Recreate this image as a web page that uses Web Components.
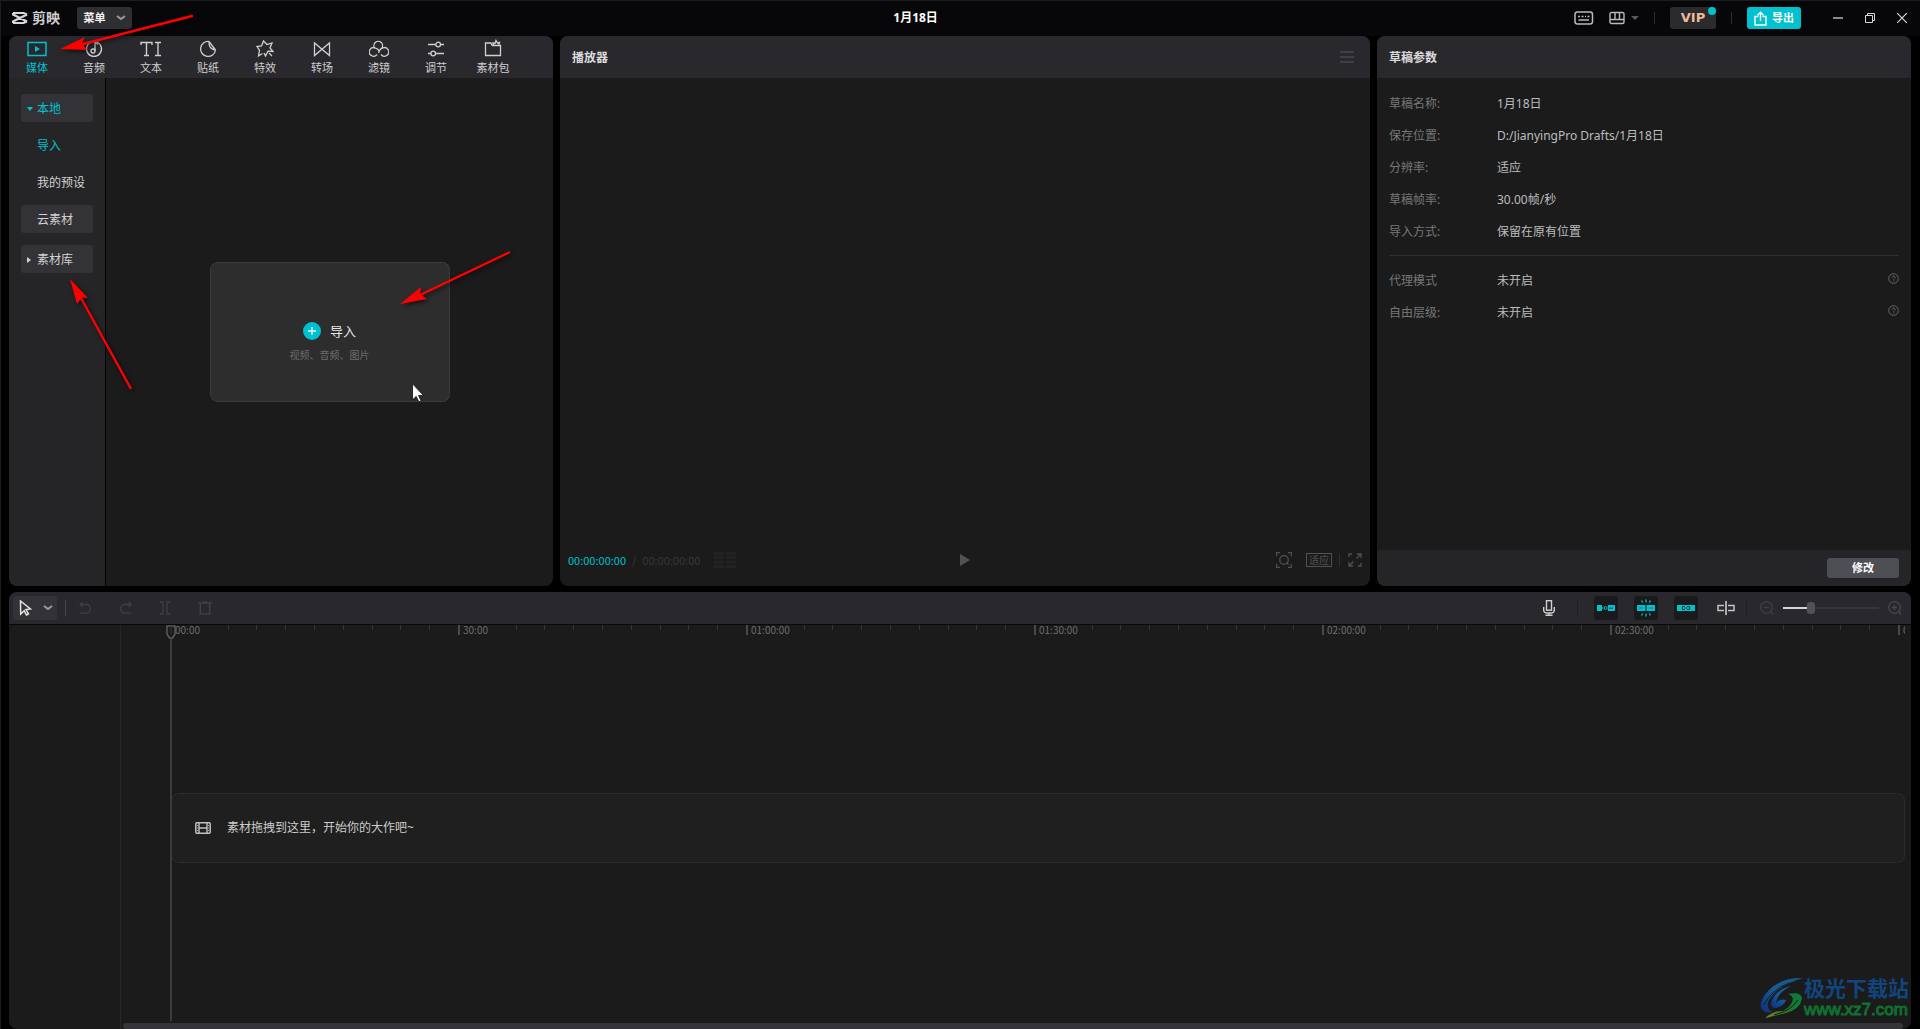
<!DOCTYPE html>
<html lang="zh-CN">
<head>
<meta charset="utf-8">
<title>剪映</title>
<style>
html,body{margin:0;height:100%;background:#000}
body{font:12px/16px "Noto Sans","Noto Sans CJK SC",sans-serif;color:#c8c8c8;overflow:hidden;
--accent:#00c1cd;--head:#29282d;--body:#1b1b1b;--side:#252527;--btn:#333237}
</style>
</head>
<body>
<jy-app></jy-app>
<script>
const ICONS = {
  logo:[16,14,'<path d="M1 2h10.500L15 3.500M1 12h10.500L15 10.500M1 2v1.500L15 10.500M1 12v-1.500L15 3.500" fill="none" stroke="#d8d8d8" stroke-width="2.200"/>'],
  chevron:[10,6,'<path d="M1 1l4 3 4-3" fill="none" stroke="#9a9a9c" stroke-width="2"/>'],
  media:[20,20,'<rect x="1" y="3.500" width="18" height="13" fill="none" stroke="currentColor" stroke-width="1.500"/><path d="M8 7l5 3-5 3z" fill="currentColor"/>'],
  audio:[20,20,'<path d="M7 3A7.500 7.500 0 1 0 13 3" fill="none" stroke="currentColor" stroke-width="1.300"/><circle cx="9" cy="12" r="2" fill="none" stroke="currentColor" stroke-width="1.300"/><path d="M11 12V3l3 2.500" fill="none" stroke="currentColor" stroke-width="1.300"/>'],
  text:[22,20,'<path d="M1 6V3.500h11V6M6.500 3.500v13M4 16.500h5M15 3.500h6M15 16.500h6M18 3.500v13" fill="none" stroke="currentColor" stroke-width="1.400"/>'],
  sticker:[20,20,'<path d="M11 2.500A7.500 7.500 0 1 0 17.500 11M11 2.500Q10.500 10 17.500 11M11 2.500L17.500 11" fill="none" stroke="currentColor" stroke-width="1.300"/>'],
  effect:[20,20,'<path d="M7.500 14.500L3.500 17l1-5.500L2 7.500l4.500-.5L8.500 2l3.500 3.500 5-1.500-2 5 3 3.500-5-.3-2.500 4.800-1.500-3M14 14l3 3" fill="none" stroke="currentColor" stroke-width="1.300"/>'],
  transition:[20,20,'<path d="M2.500 4v12.500L17.500 4v12.500z" fill="none" stroke="currentColor" stroke-width="1.300"/>'],
  filter:[20,20,'<path d="M6 9.500A4.300 4.300 0 1 1 12.500 9.500M8 15.500A4.300 4.300 0 1 1 6 8.800Q9 9.500 10 12M12 15.500A4.300 4.300 0 1 0 14 8.800Q10 10 9.700 14" fill="none" stroke="currentColor" stroke-width="1.300"/>'],
  adjust:[20,20,'<path d="M2 5.500h8M14.500 5.500H18M2 14.500h3M9.500 14.500H18" stroke="currentColor" stroke-width="1.300"/><circle cx="12.200" cy="5.500" r="2.300" fill="none" stroke="currentColor" stroke-width="1.300"/><circle cx="7.200" cy="14.500" r="2.300" fill="none" stroke="currentColor" stroke-width="1.300"/>'],
  pack:[20,20,'<path d="M9 6.500L8 4H2.500v12.500h15V6.500h-2.500M9 6.500h6M10.500 6.500l-.5-2.500 2 .5 1-3 1.500 2.500 2-.500-1 3.500" fill="none" stroke="currentColor" stroke-width="1.300"/>'],
  keyboard:[20,14,'<rect x="1" y="1" width="17.500" height="12" rx="2.500" fill="none" stroke="#b9b9b9" stroke-width="1.500"/><path d="M4 5.500h2m1.500 0h2m1.500 0h1m1.500 0h2M4.500 9h10.500" stroke="#b9b9b9" stroke-width="1.400"/>'],
  layout:[16,14,'<rect x="1" y="1.500" width="14" height="11" rx="1.500" fill="none" stroke="#b9b9b9" stroke-width="1.400"/><path d="M1 8.500h14M6 1.500v7M10.500 1.500v7" stroke="#b9b9b9" stroke-width="1.400"/>'],
  caret:[8,4,'<path d="M0 0h8L4 4z" fill="#58585a"/>'],
  share:[13,15,'<path d="M4.500 5.500H1V14h11V5.500H8.500M6.500 10V1.500M3.500 4.300l3-3 3 3" fill="none" stroke="#fff" stroke-width="1.400"/>'],
  min:[10,10,'<path d="M0 5h10" stroke="#8a8a8a" stroke-width="2"/>'],
  restore:[10,10,'<path d="M.5 2.500h7v7h-7zM2.500 2.500v-2h7v7h-2" fill="none" stroke="#d8d8d8"/>'],
  close:[10,10,'<path d="M0 0l10 10M10 0L0 10" stroke="#d8d8d8" stroke-width="1.200"/>'],
  menu:[14,12,'<path d="M0 1h14M0 6h14M0 11h14" stroke="#48474c" stroke-width="1.500"/>'],
  plus:[18,18,'<circle cx="9" cy="9" r="9" fill="#00c1cd"/><path d="M5 9h8M9 5v8" stroke="#e8f8f8" stroke-width="1.300"/>'],
  down:[6,4,'<path d="M0 0h6L3 4z" fill="currentColor"/>'],
  right:[4,6,'<path d="M0 0l4 3-4 3z" fill="currentColor"/>'],
  blocks:[22,16,'<path d="M0 1.500h10M12 1.500h10M0 5.500h10M12 5.500h10M0 10h10M12 10h10M0 14.500h10M12 14.500h10" stroke="#222" stroke-width="3"/>'],
  play:[10,12,'<path d="M0 0l10 6-10 6z" fill="#525252"/>'],
  scan:[16,16,'<path d="M.7 4V.7H4M12 .7h3.300V4M15.300 12v3.300H12M4 15.300H.7V12" fill="none" stroke="#515151" stroke-width="1.300"/><circle cx="8" cy="8" r="4.300" fill="none" stroke="#515151" stroke-width="1.300"/><path d="M10.500 10.500l2 2" stroke="#515151" stroke-width="1.300"/>'],
  expand:[14,14,'<path d="M1 4V1h3M10 13h3v-3M8.500 5.500L13 1M9 1h4v4M5.500 8.500L1 13M5 13H1V9" fill="none" stroke="#515151" stroke-width="1.300"/>'],
  help:[11,11,'<circle cx="5.500" cy="5.500" r="4.800" fill="none" stroke="#666"/><path d="M4 4.500c0-2 3-2 3 0 0 1-1.500 1-1.500 2.200M5.500 7.500v1" fill="none" stroke="#666"/>'],
  pointer:[13,16,'<path d="M1.500 1l10 8-4.500.5 2.500 4.500-2 1L5.200 10.800 1.700 14z" fill="none" stroke="#e4e4e4" stroke-width="1.500"/>'],
  undo:[13,12,'<path d="M3.500 0L1 2.500 3.500 5M1 2.500h6a4.300 4.300 0 0 1 0 8.700H1" fill="none" stroke="#403f44" stroke-width="1.300"/>'],
  redo:[12,12,'<path d="M8.500 0L11 2.500 8.500 5M11 2.500H5a4.300 4.300 0 0 0 0 8.700h6" fill="none" stroke="#403f44" stroke-width="1.300"/>'],
  split:[10,14,'<path d="M0 1h3v12H0M10 1H7v12h3" fill="none" stroke="#403f44" stroke-width="1.300"/>'],
  trash:[14,14,'<path d="M0 2h14M4.500 1h5M2.300 2v11h9.400V2" fill="none" stroke="#403f44" stroke-width="1.500"/>'],
  mic:[12,16,'<rect x="3.500" y=".7" width="5" height="9.500" fill="none" stroke="#d0d0d0" stroke-width="1.400"/><path d="M.7 7v3.500Q1 13 4 13h4q3 0 3.300-2.500V7M6 13v2M2.500 15.300h7" fill="none" stroke="#d0d0d0" stroke-width="1.400"/>'],
  magnet:[18,16,'<path d="M0 5h5v6H0zM11 5h7v6h-7z" fill="#00c1cd"/><path d="M5 8h1.500m4 0h1" stroke="#00c1cd"/><circle cx="8.500" cy="8" r="1.500" fill="none" stroke="#00c1cd"/><path d="M12 7.500h4v1.500h-4z" fill="#00626a"/>'],
  snap:[18,18,'<path d="M0 6h8.500v6H0zM9.500 6H18v6H9.500z" fill="#00c1cd"/><path d="M2 9h4m6 0h4" stroke="#008a93"/><path d="M9 .5v3M4.500 1.500l1.300 2M13.500 1.500l-1.300 2M9 17.500v-3M4.500 16.500l1.300-2M13.500 16.500l-1.300-2" stroke="#00c1cd" stroke-width="1.300"/>'],
  link:[18,16,'<path d="M0 5h18v6H0z" fill="#00c1cd"/><path d="M8 6.500H5.500v3H8M10 6.500h2.500v3H10M7.500 8h3" fill="none" stroke="#0d4a4e" stroke-width="1.200"/>'],
  preview:[18,16,'<path d="M7 5.500H1v5h6M11 5.500h6v5h-6" fill="none" stroke="#c4c4c4" stroke-width="1.500"/><path d="M9 1v14" stroke="#c4c4c4" stroke-width="1.700"/>'],
  zoomout:[14,14,'<circle cx="6.500" cy="6.500" r="5.800" fill="none" stroke="#414045" stroke-width="1.300"/><path d="M4 6.500h5M11 11l2 2.500" stroke="#414045" stroke-width="1.300"/>'],
  zoomin:[14,14,'<circle cx="6.500" cy="6.500" r="5.800" fill="none" stroke="#48474c" stroke-width="1.300"/><path d="M4 6.500h5M6.500 4v5M11 11l2 2.500" stroke="#48474c" stroke-width="1.300"/>'],
  film:[16,12,'<rect x=".8" y=".8" width="14.400" height="10.400" rx="1" fill="none" stroke="#c0c0c0" stroke-width="1.500"/><path d="M4 1v10M12 1v10M4 6h8" stroke="#c0c0c0" stroke-width="1.400"/><path d="M2.400 3v1m0 1.500v1m0 1.500v1M13.600 3v1m0 1.500v1m0 1.500v1" stroke="#c0c0c0" stroke-width="1"/>'],
  head:[10,14,'<path d="M1 1h8v8l-2.500 4h-3L1 9z" fill="#1b1b1b" stroke="#5a5a5a" stroke-width="1.500" stroke-linejoin="round"/><path d="M5 1v8" stroke="#353535"/>'],
  cursor:[12,19,'<path d="M.5 .8v16l3.700-3.400 2.700 5.400 2.200-1-2.600-5.300h5z" fill="#fff" stroke="#111" stroke-width=".8"/>'],
  swirl:[44,42,'<defs><linearGradient id="b" x1="1" y1="0" x2="0" y2="1"><stop offset="0" stop-color="#145a86"/><stop offset=".5" stop-color="#145c98"/><stop offset="1" stop-color="#102e80"/></linearGradient><linearGradient id="g" x1="1" y1="0" x2="0" y2="1"><stop offset="0" stop-color="#087a3a"/><stop offset=".6" stop-color="#237a28"/><stop offset="1" stop-color="#8a8a18"/></linearGradient></defs><path d="M43 1Q22 0 9 13-1 23 1 31 5 37 12 35 5 31 9 23 18 8 43 1z" fill="url(#b)"/><path d="M31 9Q17 12 12 23 9 31 16 31 24 29 26 23 20 21 16 26 17 16 31 9z" fill="url(#b)"/><path d="M28 17Q42 14 42 22 40 32 26 36L5 41Q14 33 23 34 32 29 33 22 32 18 28 17z" fill="url(#g)"/><path d="M4 28Q11 13 29 6" fill="none" stroke="#1b1b1b"/><path d="M14 38Q31 34 38 23" fill="none" stroke="#1b1b1b"/>']
};
const BASE = `*{box-sizing:border-box}button{font:inherit;color:inherit;background:none;border:0;padding:0;margin:0;display:flex;align-items:center;justify-content:center}`;
function define(name, css, html, setup){
  const t = document.createElement('template');
  t.innerHTML = `<style>${BASE}${css}</style>${html}`;
  customElements.define(name, class extends HTMLElement{
    constructor(){ super(); this.attachShadow({mode:'open'}); }
    connectedCallback(){
      if(this.shadowRoot.childNodes.length) return;
      this.shadowRoot.append(t.content.cloneNode(true));
      if(setup) setup(this, this.shadowRoot);
    }
  });
}
const ic = n => `<jy-icon name="${n}"></jy-icon>`;

define('jy-icon', `:host{display:block;flex:none}svg{display:block}`, '', (el, root) => {
  const [w,h,m] = ICONS[el.getAttribute('name')];
  root.innerHTML += `<svg width="${w}" height="${h}" viewBox="0 0 ${w} ${h}" aria-hidden="true">${m}</svg>`;
});

define('jy-rule', `:host{display:block;flex:none;width:1px;height:12px;background:#2c2c2e}`, '');

define('jy-titlebar', `
:host{display:grid;grid-template-columns:minmax(0,894fr) auto minmax(0,984fr);align-items:center;height:35px;padding-bottom:1px;box-sizing:border-box;background:#070709}
.left,.right,.brand{display:flex;align-items:center}
.left{padding-left:11px}
.brand{gap:4px;font-size:14px;font-weight:700;color:#cfcfcf;width:65px}
.menu{width:55px;height:22px;border-radius:3px;background:#2f2e33;color:#f2f2f2;font-size:11px;font-weight:700;gap:10px}
h1{margin:0;font-size:12px;font-weight:700;color:#fff;white-space:nowrap}
.right{justify-content:flex-end;padding-right:13px;gap:15px}
.lay{gap:6px}
.vip{position:relative;width:46px;height:22px;border-radius:3px;background:#2b2a2d;font:700 13px/16px "DejaVu Sans",sans-serif;color:#eebb9d}
.vip::after{content:"";position:absolute;top:0;right:0;width:8px;height:8px;border-radius:50%;background:var(--accent)}
.export{width:54px;height:22px;border-radius:3px;background:var(--accent);color:#fff;font-size:11px;font-weight:700;gap:5px}
.win{display:flex;gap:22px;margin-left:17px}`,
`<div class="left"><div class="brand">${ic('logo')}<span>剪映</span></div><button class="menu">菜单${ic('chevron')}</button></div>
<h1>1月18日</h1>
<div class="right"><button aria-label="快捷键">${ic('keyboard')}</button><button class="lay" aria-label="布局">${ic('layout')}${ic('caret')}</button><jy-rule></jy-rule><button class="vip">VIP</button><jy-rule></jy-rule><button class="export">${ic('share')}导出</button>
<div class="win"><button aria-label="最小化">${ic('min')}</button><button aria-label="还原">${ic('restore')}</button><button aria-label="关闭">${ic('close')}</button></div></div>`);

define('jy-panel', `
:host{display:flex;flex-direction:column;min-width:0;min-height:0;border-radius:8px;overflow:hidden;background:var(--body)}
header{height:42px;flex:none;display:flex;align-items:center;background:var(--head)}
main{flex:1;min-height:0;display:flex}`,
`<header><slot name="header"></slot></header><main><slot></slot></main><slot name="footer"></slot>`);

define('jy-tab', `
:host{display:block;width:57px;flex:none;color:#cfcfcf}
:host([active]){color:var(--accent)}
button{width:56px;flex-direction:column;gap:1px;font-size:11px;line-height:16px;white-space:nowrap}`,
`<button><span class="i"></span><slot></slot></button>`, (el, root) => {
  root.querySelector('.i').innerHTML = ic(el.getAttribute('icon'));
});

define('jy-side-item', `
:host{display:block;color:#d2d2d2}
:host([active]){color:var(--accent)}
button{width:100%;height:28px;padding-top:2px;justify-content:flex-start;border-radius:3px;white-space:nowrap}
:host([filled]) button{background:var(--btn)}
.i{width:16px;padding-left:6px;flex:none}`,
`<button><span class="i"></span><slot></slot></button>`, (el, root) => {
  const n = el.getAttribute('icon');
  if(n) root.querySelector('.i').innerHTML = ic(n);
});

define('jy-media', `
:host{display:flex;flex:1;min-width:0}
nav{width:97px;flex:none;background:var(--side);border-right:1px solid #050505;padding:16px 12px;display:flex;flex-direction:column}
.group{display:flex;flex-direction:column;gap:9px;margin:9px 0 12px}
section{flex:1;display:flex;align-items:center;justify-content:center}
.card{width:240px;height:140px;border-radius:8px;border:1px dotted #4a4a4a;background:#2d2d2d;flex-direction:column;justify-content:flex-start;padding-top:56px;gap:4px}
.row{display:flex;align-items:center;gap:9px;font-size:13px;line-height:24px;color:#e6e6e6}
.sub{font-size:10px;line-height:16px;color:#6c6c6c}`,
`<nav><jy-side-item filled active icon="down">本地</jy-side-item><div class="group"><jy-side-item active>导入</jy-side-item><jy-side-item>我的预设</jy-side-item><jy-side-item filled>云素材</jy-side-item></div><jy-side-item filled icon="right">素材库</jy-side-item></nav>
<section><button class="card"><span class="row">${ic('plus')}导入</span><span class="sub">视频、音频、图片</span></button></section>`);

define('jy-player', `
:host{display:flex;flex-direction:column;flex:1;min-width:0}
.stage{flex:1}
.bar{height:52px;display:grid;grid-template-columns:1fr auto 1fr;align-items:center;padding:0 8px}
.time,.tools{display:flex;align-items:center}
.time{font:11px/16px "Noto Sans CJK SC",sans-serif;color:#383838;gap:6px}
.time b{font-weight:400;color:var(--accent)}
.time jy-icon{margin-left:8px}
.tools{justify-content:flex-end}
.fit{margin:0 7px 0 14px;border:1px solid #515151;width:26px;height:14px;font-size:10px;line-height:12px;color:#515151}
.full{margin-left:8px}`,
`<div class="stage"></div><div class="bar"><div class="time"><b>00:00:00:00</b><span>/</span><span>00:00:00:00</span>${ic('blocks')}</div><button aria-label="播放">${ic('play')}</button>
<div class="tools"><button aria-label="缩放">${ic('scan')}</button><button class="fit">适应</button><jy-rule></jy-rule><button class="full" aria-label="全屏">${ic('expand')}</button></div></div>`);

define('jy-param', `
:host{display:flex;height:32px;align-items:center;color:#bdbdbd;white-space:nowrap}
.l{width:108px;flex:none;color:#777}
.v{flex:1}
jy-icon{align-self:flex-start;margin-top:8px}`,
`<span class="l"></span><span class="v"><slot></slot></span>`, (el, root) => {
  root.querySelector('.l').textContent = el.getAttribute('label');
  if(el.hasAttribute('help')) root.append(Object.assign(document.createElement('template'), {innerHTML: ic('help')}).content);
});

define('jy-params', `
:host{display:block;flex:1;padding:10px 12px}
hr{border:0;height:1px;margin:7px 0 9px;background:#303030}`,
`<jy-param label="草稿名称:">1月18日</jy-param><jy-param label="保存位置:">D:/JianyingPro Drafts/1月18日</jy-param><jy-param label="分辨率:">适应</jy-param><jy-param label="草稿帧率:">30.00帧/秒</jy-param><jy-param label="导入方式:">保留在原有位置</jy-param>
<hr><jy-param label="代理模式" help>未开启</jy-param><jy-param label="自由层级:" help>未开启</jy-param>`);

define('jy-ruler', `
:host{display:flex;min-width:0;overflow:hidden;font:10px/10px "Noto Sans CJK SC",sans-serif;color:#6e6e6e}
.seg{width:288px;flex:none;display:grid;grid-template-columns:repeat(10,1fr);grid-template-rows:16px}
.seg>*{grid-row:1}
i{border-left:1px solid #363636;height:5px}
span{grid-column:1/-1;height:10px;border-left:2px solid #4a4a4a;padding-left:3px}
.first span{border-color:transparent}`, '', (el, root) => {
  ['00:00','30:00','01:00:00','01:30:00','02:00:00','02:30:00','03:00:00'].forEach((t, n) => {
    const s = document.createElement('div');
    s.className = n ? 'seg' : 'seg first';
    let h = `<span>${t}</span>`;
    for(let k = 3; k <= 10; k++) h += `<i style="grid-column:${k}"></i>`;
    s.innerHTML = h;
    root.append(s);
  });
});

define('jy-timeline', `
:host{display:flex;flex-direction:column;min-height:0;border-radius:8px;overflow:hidden;background:var(--body)}
.bar{height:33px;flex:none;display:flex;align-items:center;background:var(--head);border-bottom:1px solid #080808;padding:0 9px 0 4px}
.sel{width:44px;height:24px;border-radius:3px;background:var(--btn);gap:11px;padding-left:1px}
.edit{display:flex;align-items:center;gap:28px;margin-left:13px}
.sep{margin-left:8px;height:16px;background:#4a494e}
.right{display:flex;align-items:center;margin-left:auto}
.dark{background:#1f1e21;height:16px}
.mic{margin-right:22px}
.toggles{display:flex;gap:16px;margin:0 19px 0 16px}
.toggles button{width:24px;height:24px;border-radius:3px;background:#1a1a1c}
.pv{margin-right:11px}
.zo{margin-left:13px}
input{appearance:none;width:96px;height:12px;margin:0 9px;background:linear-gradient(#d5d5d5,#d5d5d5) left/26px 2px no-repeat,linear-gradient(#38373b,#38373b) center/100% 2px no-repeat}
input::-webkit-slider-thumb{appearance:none;width:8px;height:12px;border-radius:3px;background:#525155}
.body{flex:1;display:flex;min-height:0}
.heads{width:112px;flex:none;border-right:1px solid #272727}
.area{position:relative;flex:1;min-width:0;display:grid;grid-template-columns:minmax(0,1fr);grid-template-rows:16px 152fr 70px 160fr 6px}
jy-ruler{grid-row:1;margin:-4px 6px 0 49px;padding-top:4px}
.drop{grid-row:3;margin:0 6px 0 50px;border:1px dotted #383838;border-radius:8px;background:#1f1f1f;display:flex;align-items:center;gap:16px;padding-left:23px;color:#cdcdcd}
.scroll{grid-row:5;margin:0 8px 0 2px;border-radius:3px;background:#353439}
.playhead{position:absolute;left:45px;top:0;bottom:8px;width:10px;display:flex;flex-direction:column;align-items:center}
.playhead::after{content:"";flex:1;width:2px;background:#3c3c3c}`,
`<div class="bar"><button class="sel" aria-label="选择">${ic('pointer')}${ic('chevron')}</button><jy-rule class="sep"></jy-rule>
<div class="edit"><button aria-label="撤销">${ic('undo')}</button><button aria-label="恢复">${ic('redo')}</button><button aria-label="分割">${ic('split')}</button><button aria-label="删除">${ic('trash')}</button></div>
<div class="right"><button class="mic" aria-label="录音">${ic('mic')}</button><jy-rule class="dark"></jy-rule>
<div class="toggles"><button aria-label="主轨磁吸">${ic('magnet')}</button><button aria-label="自动吸附">${ic('snap')}</button><button aria-label="联动">${ic('link')}</button></div>
<button class="pv" aria-label="预览轴">${ic('preview')}</button><jy-rule class="dark"></jy-rule><button class="zo" aria-label="缩小">${ic('zoomout')}</button><input type="range" aria-label="时间线缩放" min="0" max="100" value="27"><button aria-label="放大">${ic('zoomin')}</button></div></div>
<div class="body"><div class="heads"></div><div class="area"><jy-ruler></jy-ruler><div class="drop">${ic('film')}<span>素材拖拽到这里，开始你的大作吧~</span></div><div class="scroll"></div><div class="playhead">${ic('head')}</div></div></div>`);

define('jy-marks', `
:host{position:absolute;inset:0;pointer-events:none}
.arrows{position:absolute;left:0;top:0;filter:drop-shadow(2px 2px 2px rgba(0,0,0,.6))}
.cur{position:absolute;left:411px;top:382px}
.wm{position:absolute;right:11px;bottom:9px;display:flex;align-items:center;color:#10467f}
.wm div{display:flex;flex-direction:column}
.wm b{font-size:21px;line-height:24px}
.wm span{font:17px/20px "Liberation Sans",sans-serif;color:#0f7030;-webkit-text-stroke:1px #0f7030}`,
`<svg class="arrows" width="560" height="420" viewBox="1 1 560 420"><g fill="red" stroke="red" stroke-width="2.400" stroke-linecap="round"><path d="M83 44L192 16M421 294.500L509 252.500M81.500 299L130.500 388"/><path stroke="none" d="M60 49l25-12-3 6 5 7zM400 304l21-17-1 7 7 5zM70 279l18 19-6-.5-5 6.500z"/></g></svg>
<div class="cur">${ic('cursor')}</div>
<div class="wm">${ic('swirl')}<div><b>极光下载站</b><span>www.xz7.com</span></div></div>`);

define('jy-app', `
:host{display:flex;flex-direction:column;position:relative;height:100vh;border:solid #1c1c1e;border-width:1px 0 0 1px;box-sizing:border-box;overflow:hidden}
.work{flex:1;min-height:0;display:grid;grid-template-columns:minmax(0,544fr) minmax(0,810fr) minmax(0,534fr);grid-template-rows:minmax(0,550fr) minmax(0,437fr);gap:6px 7px;padding:0 9px 0 8px}
jy-timeline{grid-column:1/-1}
.tabs{display:flex;align-self:flex-start;padding-top:3px}
h2{flex:1;margin:0 12px;padding-top:2px;font-size:12px;line-height:16px;font-weight:700;color:#dcdcdc}
.mb{margin-right:16px}
.foot{display:flex;height:36px;flex:none;align-items:center;justify-content:flex-end;padding-right:12px;background:var(--side)}
.foot button{width:72px;height:20px;border-radius:3px;background:#4e4e55;color:#fff;font-size:11px;font-weight:700}`,
`<jy-titlebar></jy-titlebar>
<div class="work">
<jy-panel><div slot="header" class="tabs"><jy-tab icon="media" active>媒体</jy-tab><jy-tab icon="audio">音频</jy-tab><jy-tab icon="text">文本</jy-tab><jy-tab icon="sticker">贴纸</jy-tab><jy-tab icon="effect">特效</jy-tab><jy-tab icon="transition">转场</jy-tab><jy-tab icon="filter">滤镜</jy-tab><jy-tab icon="adjust">调节</jy-tab><jy-tab icon="pack">素材包</jy-tab></div><jy-media></jy-media></jy-panel>
<jy-panel><h2 slot="header">播放器</h2><button slot="header" class="mb" aria-label="菜单">${ic('menu')}</button><jy-player></jy-player></jy-panel>
<jy-panel><h2 slot="header">草稿参数</h2><jy-params></jy-params><div slot="footer" class="foot"><button>修改</button></div></jy-panel>
<jy-timeline></jy-timeline>
</div>
<jy-marks></jy-marks>`);
</script>
</body>
</html>
